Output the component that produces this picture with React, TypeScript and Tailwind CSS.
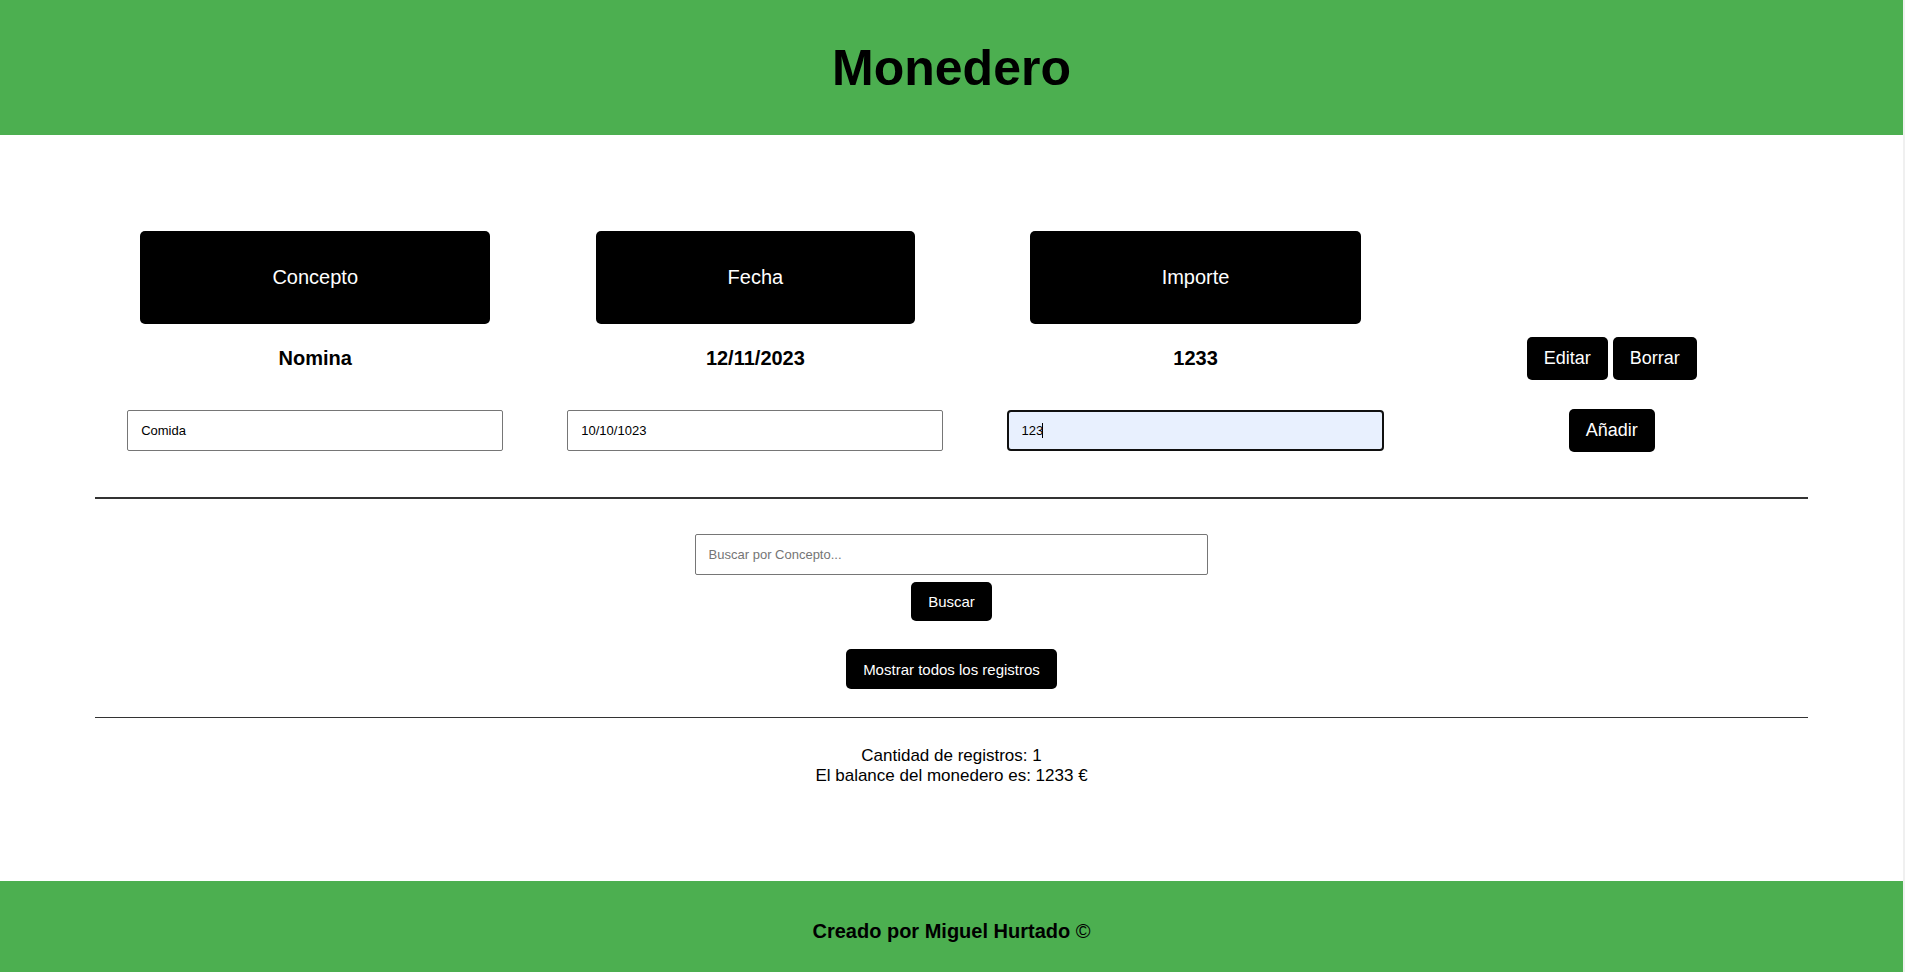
import { useState } from "react";

type Registro = { concepto: string; fecha: string; importe: number };

const registros: Registro[] = [{ concepto: "Nomina", fecha: "12/11/2023", importe: 1233 }];

const headButton =
  "h-[93px] rounded-[5px] bg-black px-[20%] pb-[2px] text-[20px] leading-6 text-white sm:px-[132px]";
const rowButton =
  "h-[43px] rounded-[5px] bg-black px-[17px] pb-[2px] text-[18px] leading-5 text-white";
const searchButton = "rounded-[5px] bg-black px-[17px] text-[15px] leading-[18px] text-white";
const field =
  "h-[41px] rounded-[2px] border border-[#767676] px-[13px] text-[13px] leading-4 text-black";
const cell = "px-0 pt-[13px]";

export default function App() {
  const [concepto, setConcepto] = useState("Comida");
  const [fecha, setFecha] = useState("10/10/1023");
  const [importe, setImporte] = useState("123");
  const [busqueda, setBusqueda] = useState("");
  const [idle, setIdle] = useState(true);
  const balance = registros.reduce((total, r) => total + r.importe, 0);
  const leaveIdle = () => setIdle(false);

  return (
    <div className="flex min-h-screen flex-col border-r-2 border-[#f0f0f0] bg-white font-['Liberation_Sans',Arial,sans-serif] text-black">
      <header className="bg-[#4caf50] pt-[39px] pb-[37px] text-center">
        <h1 className="text-[50px] leading-[59px] font-bold">Monedero</h1>
      </header>

      <main className="px-[5%] pt-24 pb-[95px]">
        <table className="w-full table-fixed border-collapse text-center">
          <colgroup>
            <col className="w-[25.7%]" />
            <col className="w-[25.7%]" />
            <col className="w-[25.7%]" />
            <col />
          </colgroup>
          <thead>
            <tr>
              <th className="p-0 font-normal"><button type="button" className={headButton}>Concepto</button></th>
              <th className="p-0 font-normal"><button type="button" className={headButton}>Fecha</button></th>
              <th className="p-0 font-normal"><button type="button" className={headButton}>Importe</button></th>
              <td />
            </tr>
          </thead>
          <tbody>
            {registros.map((r) => (
              <tr key={r.concepto} className="text-[20px] leading-6 font-bold">
                <td className={`${cell} pb-[2px]`}>{r.concepto}</td>
                <td className={`${cell} pb-[2px]`}>{r.fecha}</td>
                <td className={`${cell} pb-[2px]`}>{r.importe}</td>
                <td className={`${cell} font-normal`}>
                  <div className="flex justify-center gap-[5px]">
                    <button type="button" className={rowButton}>Editar</button>
                    <button type="button" className={rowButton}>Borrar</button>
                  </div>
                </td>
              </tr>
            ))}
            <tr>
              <td className="px-8 pt-[29px]">
                <input aria-label="Concepto" className={`${field} w-full`} value={concepto} onChange={(e) => setConcepto(e.target.value)} />
              </td>
              <td className="px-8 pt-[29px]">
                <input aria-label="Fecha" className={`${field} w-full`} value={fecha} onChange={(e) => setFecha(e.target.value)} />
              </td>
              <td className="px-8 pt-[29px]">
                <div className="relative flex">
                  <input
                    aria-label="Importe"
                    autoFocus
                    className={`${field} w-full bg-[#e8f0fe] ${idle ? "caret-transparent" : "caret-black"}`}
                    value={importe}
                    onKeyDown={leaveIdle}
                    onPointerDown={leaveIdle}
                    onBlur={leaveIdle}
                    onChange={(e) => setImporte(e.target.value)}
                  />
                  {/* steady caret until the first interaction */}
                  {idle && <span aria-hidden="true" className="absolute top-[13px] left-[35px] h-[15px] w-px bg-black" />}
                </div>
              </td>
              <td className="px-0 pt-[29px]">
                <div className="flex justify-center">
                  <button type="button" className={rowButton}>Añadir</button>
                </div>
              </td>
            </tr>
          </tbody>
        </table>

        <hr className="mt-[45px] border-t-2 border-[#333333]" />

        <form className="mt-[35px] flex flex-col items-center" onSubmit={(e) => e.preventDefault()}>
          <input
            aria-label="Buscar por Concepto"
            placeholder="Buscar por Concepto..."
            className={`${field} w-[30%] placeholder:text-[#757575]`}
            value={busqueda}
            onChange={(e) => setBusqueda(e.target.value)}
          />
          <button type="submit" className={`${searchButton} mt-[7px] h-[39px]`}>Buscar</button>
          <button type="button" className={`${searchButton} mt-7 h-10 pt-[2px]`}>Mostrar todos los registros</button>
        </form>

        <hr className="mt-7 border-t border-[#333333]" />

        <div className="mt-7 text-center text-[17px] leading-5">
          <p>Cantidad de registros: {registros.length}</p>
          <p>El balance del monedero es: {balance} €</p>
        </div>
      </main>

      <footer className="grow bg-[#4caf50] pt-[38px] pb-[29px] text-center">
        <p className="text-[20px] leading-6 font-bold">
          Creado por Miguel Hurtado <span className="font-normal">©</span>
        </p>
      </footer>
    </div>
  );
}
